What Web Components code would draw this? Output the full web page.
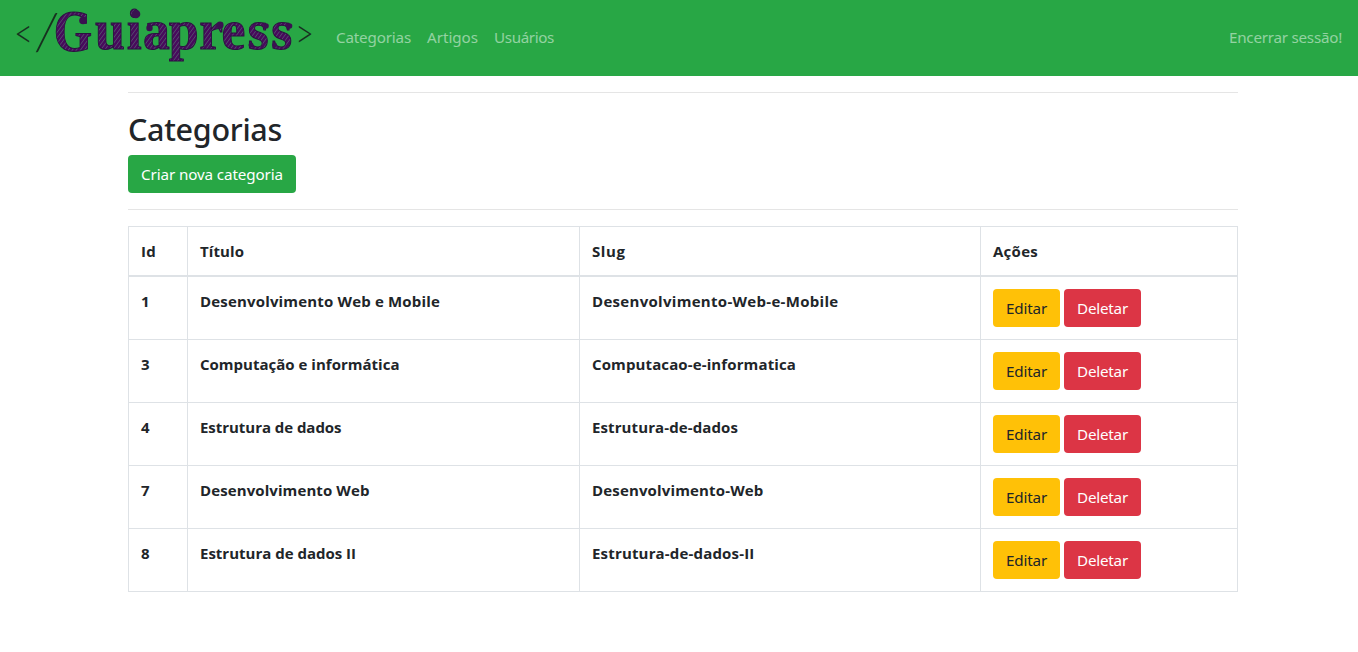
<!DOCTYPE html>
<html lang="pt-BR">
<head>
<meta charset="utf-8">
<title>Guiapress - Categorias</title>
<style>
body{margin:0;background:#fff;color:#212529;font:400 15.2px/24px "Noto Sans","Open Sans",sans-serif}
</style>
</head>
<body>
<gp-app></gp-app>
<script>
const define=(name,html,setup)=>{
  const t=document.createElement('template');t.innerHTML=html;
  customElements.define(name,class extends HTMLElement{
    connectedCallback(){
      if(this.shadowRoot)return;
      this.attachShadow({mode:'open'}).append(t.content.cloneNode(true));
      if(setup)setup(this,this.shadowRoot);
    }
  });
};

/* Text run tracked so that it fills the width given in "w". */
define('gp-text',`<style>:host{display:inline-block;white-space:nowrap}span{display:inline-block}</style><span><slot></slot></span>`,
(host,root)=>{
  const w=parseFloat(host.getAttribute('w'));
  if(!w)return;
  host.style.width=w+'px';
  const s=root.querySelector('span');
  s.style.letterSpacing=(w-s.getBoundingClientRect().width)/host.textContent.length+'px';
});

define('gp-logo',`<style>:host{display:block;width:300px;height:60px}svg{display:block;overflow:visible}</style>
<svg width="300" height="60" viewBox="16 8 300 60">
  <defs><pattern id="hatch" width="3.4" height="3.4" patternUnits="userSpaceOnUse" patternTransform="rotate(38)">
    <rect width="3.4" height="3.4" fill="#480a5c"/><rect width=".5" height="3.4" fill="#5a7a78"/></pattern></defs>
  <g fill="#17301f" font-family="Lato" font-weight="300">
    <text transform="translate(14 48.500) scale(1.130 1.400)" font-size="29">&lt;</text>
    <text transform="translate(34 51) skewX(-5)" font-size="51">/</text>
    <text transform="translate(295 49) scale(1.130 1.400)" font-size="29">&gt;</text>
  </g>
  <text transform="translate(0 50) scale(.935 1)" x="57.5 101.5 135.500 153 180.500 213 237 265 290" y="2 0 0 0 0 0 0 0 0" font-family="Liberation Serif" font-weight="700" font-size="57.500" fill="url(#hatch)" stroke="#2b1040" stroke-width="1"><tspan font-size="60" textLength="41" lengthAdjust="spacingAndGlyphs">G</tspan>uiapress</text>
  <g fill="#3a1150"><circle cx="83" cy="21.500" r="3.800"/><circle cx="136" cy="15" r="4.300"/><circle cx="149.500" cy="29" r="3.200"/><circle cx="220" cy="26" r="3.600"/><circle cx="266" cy="27" r="2.800"/><circle cx="289.500" cy="27" r="2.800"/><circle cx="251" cy="46" r="2.500"/><circle cx="274.500" cy="46" r="2.500"/></g>
</svg>`);

define('gp-navbar',`<style>
:host{display:flex;align-items:center;box-sizing:border-box;height:76px;padding:7px 16px 9px;background:#28a745;color:rgba(255,255,255,.5)}
gp-logo{margin-right:20px}
nav{display:flex;gap:16px;flex:1}
</style><gp-logo></gp-logo><nav><slot></slot></nav><slot name="end"></slot>`);

define('gp-button',`<style>
:host{display:inline-flex;box-sizing:border-box;height:38px;padding:7px 13px;border-radius:4px;background:#28a745;color:#fff;vertical-align:top}
:host([kind=warning]){background:#ffc107;color:#212529}
:host([kind=danger]){background:#dc3545}
</style><slot></slot>`);

define('gp-rule',`<style>:host{display:block;height:1px;margin:16px 0;background:rgba(0,0,0,.1)}</style>`);

define('gp-table',`<style>
:host{display:block}
table{width:1109px;border-collapse:collapse;table-layout:fixed;border:1px solid #dee2e6}
th,td{box-sizing:border-box;padding:12px;border:1px solid #dee2e6;text-align:left;vertical-align:top;font:700 15px/24px "Open Sans","Noto Sans",sans-serif}
thead th{height:49px;padding-bottom:11px;border-bottom-width:2px}
tbody td{height:63px}
.acts{display:flex;gap:4px;font:400 15.2px/24px "Noto Sans","Open Sans",sans-serif}
</style>
<table><colgroup><col style="width:59px"><col style="width:392px"><col style="width:401px"><col style="width:257px"></colgroup>
<thead><tr><th><gp-text w="15">Id</gp-text></th><th><gp-text w="44">Título</gp-text></th><th><gp-text w="33.500">Slug</gp-text></th><th><gp-text w="45">Ações</gp-text></th></tr></thead><tbody></tbody></table>`,
(host,root)=>{
  const rows=[[1,'Desenvolvimento Web e Mobile',240,'Desenvolvimento-Web-e-Mobile',246.5],
    [3,'Computação e informática',199.5,'Computacao-e-informatica',204],
    [4,'Estrutura de dados',141.5,'Estrutura-de-dados',146],
    [7,'Desenvolvimento Web',169.5,'Desenvolvimento-Web',171.5],
    [8,'Estrutura de dados II',156,'Estrutura-de-dados-II',162.5]];
  root.querySelector('tbody').innerHTML=rows.map(([id,t,tw,s,sw])=>`<tr><td><gp-text w="9">${id}</gp-text></td><td><gp-text w="${tw}">${t}</gp-text></td><td><gp-text w="${sw}">${s}</gp-text></td><td><div class="acts"><gp-button kind="warning"><gp-text w="41">Editar</gp-text></gp-button><gp-button kind="danger"><gp-text w="51">Deletar</gp-text></gp-button></div></td></tr>`).join('');
});

define('gp-app',`<style>
:host{display:block}
main{width:1110px;margin-left:128px;display:flow-root}
h2{box-sizing:border-box;height:38px;padding-top:1px;margin:0 0 8px;font-size:30.5px;line-height:38px;font-weight:500}
</style>
<gp-navbar><gp-text w="75">Categorias</gp-text><gp-text w="51">Artigos</gp-text><gp-text w="60">Usuários</gp-text><gp-text slot="end" w="113">Encerrar sessão!</gp-text></gp-navbar>
<main><gp-rule></gp-rule><h2><gp-text w="154">Categorias</gp-text></h2>
<gp-button><gp-text w="142">Criar nova categoria</gp-text></gp-button>
<gp-rule></gp-rule><gp-table></gp-table></main>`);
</script>
</body>
</html>
